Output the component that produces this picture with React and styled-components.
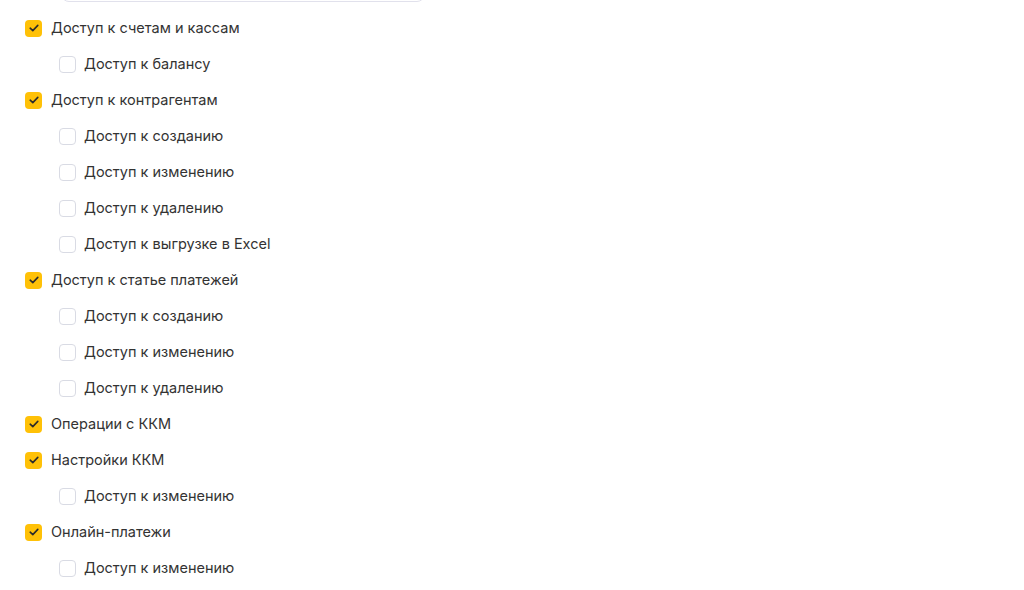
import React from 'react'
import styled, { createGlobalStyle } from 'styled-components'

const GlobalStyle = createGlobalStyle`
  body {
    margin: 0;
    background: #fff;
    font-family: Inter, "Noto Sans", sans-serif;
    color: #333;
    overflow: hidden;
  }
`

const Page = styled.div`
  padding-left: 25px;
  height: 590px;
  overflow: hidden;
`

const SearchInput = styled.div`
  margin-top: -38px;
  margin-left: 36px;
  width: 364px;
  height: 40px;
  box-sizing: border-box;
  border: 1px solid #e1e1ec;
  border-radius: 8px;
`

const List = styled.ul`
  list-style: none;
  margin: 8px 0 0;
  padding: 0;
`

const Row = styled.li`
  display: flex;
  align-items: center;
  gap: 9px;
  height: 36px;
  padding-left: ${(p) => (p.$child ? 34 : 0)}px;
  font-size: 14.5px;
  line-height: 20px;
`

const Label = styled.span`
  margin-left: ${(p) => (p.$child ? -1 : 0)}px;
`

const Box = styled.span`
  width: 17px;
  height: 17px;
  box-sizing: border-box;
  border-radius: 4px;
  display: flex;
  align-items: center;
  justify-content: center;
  background: ${(p) => (p.$checked ? '#ffc107' : '#fff')};
  border: ${(p) => (p.$checked ? 'none' : '1.5px solid #d9dbe4')};
  flex-shrink: 0;
`

const items = [
  ['Доступ к счетам и кассам', true],
  ['Доступ к балансу', false],
  ['Доступ к контрагентам', true],
  ['Доступ к созданию', false],
  ['Доступ к изменению', false],
  ['Доступ к удалению', false],
  ['Доступ к выгрузке в Excel', false],
  ['Доступ к статье платежей', true],
  ['Доступ к созданию', false],
  ['Доступ к изменению', false],
  ['Доступ к удалению', false],
  ['Операции с ККМ', true],
  ['Настройки ККМ', true],
  ['Доступ к изменению', false],
  ['Онлайн-платежи', true],
  ['Доступ к изменению', false],
]

function Check() {
  return (
    <svg width="10" height="8" viewBox="0 0 10 8" fill="none">
      <path d="M1.2 4.2 L3.8 6.6 L8.8 1.4" stroke="#2b2b2b" strokeWidth="1.6" strokeLinecap="round" strokeLinejoin="round" />
    </svg>
  )
}

export default function App() {
  return (
    <Page>
      <GlobalStyle />
      <SearchInput />
      <List>
        {items.map(([label, parent], i) => (
          <Row key={i} $child={!parent}>
            <Box $checked={parent}>{parent && <Check />}</Box>
            <Label $child={!parent}>{label}</Label>
          </Row>
        ))}
      </List>
    </Page>
  )
}
